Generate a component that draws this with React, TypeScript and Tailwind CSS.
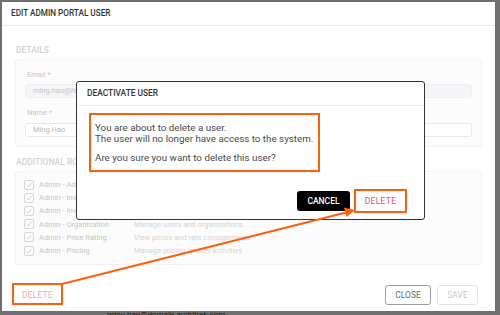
const roles = [
  { name: 'Admin - Administration', desc: 'Manage administration settings' },
  { name: 'Admin - Invoicing', desc: 'View and manage invoices' },
  { name: 'Admin - Inventory', desc: 'Manage inventory records' },
  { name: 'Admin - Organisation', desc: 'Manage users and organisations' },
  { name: 'Admin - Price Rating', desc: 'View prices and rate consignments' },
  { name: 'Admin - Pricing', desc: 'Manage pricing related activities' },
];

function CheckBox() {
  return (
    <div className="shrink-0 w-[10px] h-[10px] rounded-[2px] border border-[#d6d6d6] flex items-center justify-center">
      <svg width="8" height="8" viewBox="0 0 10 10" fill="none">
        <path d="M2 5.2 L4.2 7.3 L8 2.8" stroke="#c9c9c9" strokeWidth="1.1" />
      </svg>
    </div>
  );
}

export default function App() {
  return (
    <div className="relative w-[500px] h-[315px] overflow-hidden bg-[#6f6f6f] pl-[2px] pt-[2px] font-['Roboto',sans-serif]">
      {/* page behind */}
      <div className="absolute left-[107px] top-[311px] text-[8px] text-[#222] leading-none">ming.hao@domain.architrak.com</div>

      {/* Edit admin portal user modal */}
      <div className="relative w-[493px] h-[309px] bg-white flex flex-col">
        <div className="h-[24px] px-[9px] flex items-center border-b border-[#e9e9e9] text-[8.2px] font-medium text-[#333]">
          EDIT ADMIN PORTAL USER
        </div>

        <div className="px-[13px] flex-1 flex flex-col">
          <div className="mt-[18px] h-[12px] flex items-center pl-[1px] text-[8.5px] font-medium text-[#d2d2d2]">DETAILS</div>
          <div className="mt-[3px] h-[88px] border border-[#f2f2f2] bg-[#fcfcfc] rounded-[3px] px-[9px] pt-[10px]">
            <div className="h-[10px] flex items-center pl-[2px] text-[7.5px] text-[#c6c6c6]">
              Email <span className="ml-[2px] text-[#f3b4b4]">*</span>
            </div>
            <div className="mt-[4px] h-[14px] rounded-[3px] border border-[#eeeff2] bg-[#f4f5f8] pl-[7px] flex items-center text-[7.5px] text-[#c4c4c4]">
              ming.hao@hi5.com.au
            </div>
            <div className="mt-[10px] h-[10px] flex items-center pl-[2px] text-[7.5px] text-[#c6c6c6]">
              Name <span className="ml-[2px] text-[#f3b4b4]">*</span>
            </div>
            <div className="mt-[5px] h-[14px] rounded-[3px] border border-[#e8e8e8] bg-white pl-[7px] flex items-center text-[7.5px] text-[#bcbcbc]">
              Ming Hao
            </div>
          </div>

          <div className="mt-[9px] h-[12px] flex items-center pl-[1px] text-[8.5px] font-medium text-[#d2d2d2]">ADDITIONAL ROLES</div>
          <div className="mt-[3px] h-[94px] border border-[#f2f2f2] bg-[#fcfcfc] rounded-[3px] pl-[8px] pt-[6px]">
            {roles.map((r) => (
              <div key={r.name} className="h-[13.2px] flex items-center">
                <CheckBox />
                <div className="ml-[5px] w-[95px] shrink-0 text-[7.5px] text-[#c4c4c4]">{r.name}</div>
                <div className="text-[7.5px] text-[#d4d4d4]">{r.desc}</div>
              </div>
            ))}
          </div>

          <div className="mt-[20px] h-[20px] flex items-center">
            <div className="ml-[7px] text-[8.5px] tracking-[0.2px] text-[#f4a6b0]">DELETE</div>
            <div className="ml-auto flex gap-[6px] pr-[4px]">
              <div className="w-[46px] h-[20px] rounded-[3px] border border-[#9c9c9c] flex items-center justify-center text-[8.5px] text-[#6a6a6a]">CLOSE</div>
              <div className="w-[41px] h-[20px] rounded-[3px] border border-[#e2e2e2] flex items-center justify-center text-[8.5px] text-[#c8c8c8]">SAVE</div>
            </div>
          </div>
        </div>
      </div>

      {/* Deactivate user dialog */}
      <div className="absolute left-[76px] top-[81px] w-[349px] h-[139px] bg-white border border-[#333] rounded-[3px] flex flex-col">
        <div className="h-[24px] px-[10px] flex items-center border-b border-[#ececec] text-[8.4px] font-medium text-[#333]">
          DEACTIVATE USER
        </div>
        <div className="px-[18px] pt-[16px] text-[9.8px] leading-[11px] text-[#4a4a4a]">
          <p>You are about to delete a user.</p>
          <p>The user will no longer have access to the system.</p>
          <p className="mt-[8px]">Are you sure you want to delete this user?</p>
        </div>
        <div className="mt-auto mb-[8px] pr-[19px] flex justify-end gap-[6px]">
          <div className="w-[53px] h-[20px] rounded-[3px] bg-black flex items-center justify-center text-[8.5px] font-medium text-white">CANCEL</div>
          <div className="w-[49px] h-[20px] flex items-center justify-center text-[8.5px] tracking-[0.3px] text-[#e4546c]">DELETE</div>
        </div>
      </div>

      {/* annotations */}
      <div className="absolute left-[89px] top-[113px] w-[231px] h-[59px] border-2 border-[#fa5f12]" />
      <div className="absolute left-[354px] top-[189px] w-[53px] h-[24px] border-2 border-[#fa5f12]" />
      <div className="absolute left-[12px] top-[283px] w-[51px] h-[22px] border-2 border-[#fa5f12]" />
      <svg className="absolute left-0 top-0" width="500" height="315">
        <line x1="62" y1="284" x2="346" y2="212.5" stroke="#fa5f12" strokeWidth="2" />
        <polygon points="355,210 344,207.5 346.5,217" fill="#fa5f12" />
      </svg>
    </div>
  );
}
